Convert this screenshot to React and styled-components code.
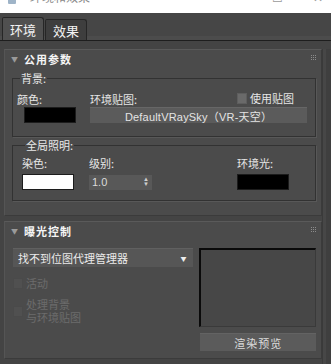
import React from "react";
import styled, { createGlobalStyle } from "styled-components";

const GlobalStyle = createGlobalStyle`
  html, body { margin: 0; padding: 0; background: #444444; }
  body {
    font-family: "Noto Sans CJK SC", "Liberation Sans", sans-serif;
    font-size: 11px;
    color: #e6e6e6;
    width: 331px;
    height: 364px;
    overflow: hidden;
  }
  * { box-sizing: border-box; }
`;

const Window = styled.div`
  width: 331px;
  height: 364px;
  display: flex;
  flex-direction: column;
  background: #444444;
`;

const TitleBar = styled.div`
  height: 13px;
  background: #ffffff;
  overflow: hidden;
  display: flex;
  align-items: flex-end;
  padding: 0 8px 0 8px;
`;

const TitleIcon = styled.div`
  width: 8px;
  height: 4px;
  margin-bottom: 9px;
  background: #9fb4c8;
  border-radius: 0 0 1px 1px;
`;

const TitleText = styled.div`
  font-size: 12px;
  line-height: 12px;
  color: #8a8a8a;
  margin-left: 14px;
  margin-bottom: 10px;
  flex: 1;
`;

const TitleBtn = styled.div`
  font-size: 12px;
  line-height: 12px;
  color: #9a9a9a;
  margin-bottom: 10px;
  margin-left: ${(p) => p.$gap}px;
`;

const TabStrip = styled.div`
  height: 28px;
  display: flex;
  align-items: flex-end;
  padding-left: 2px;
  background: #464646;
  border-bottom: 1px solid #1e1e1e;
  box-shadow: 0 -4px 0 #4c4c4c inset;
`;

const Tab = styled.div`
  height: ${(p) => (p.$active ? 23 : 21)}px;
  padding: 0 7px;
  display: flex;
  align-items: center;
  font-size: 13px;
  color: #f2f2f2;
  background: ${(p) => (p.$active ? "#505050" : "#3e3e3e")};
  border: 1px solid #262626;
  border-bottom: none;
  border-radius: 2px 3px 0 0;
  margin-right: 1px;
`;

const Body = styled.div`
  flex: 1;
  display: flex;
  padding-top: 8px;
`;

const Main = styled.div`
  flex: 1;
  display: flex;
  flex-direction: column;
  gap: 5px;
  padding-left: 4px;
`;

const ScrollStrip = styled.div`
  width: 9px;
  border-left: 1px solid #3a3a3a;
  background: #3f3f3f;
  box-shadow: 3px 0 0 #474747 inset;
`;

const Rollout = styled.div`
  width: 318px;
  height: ${(p) => p.$h}px;
  background: #4b4b4b;
  border: 1px solid #3b3b3b;
  border-top-color: #5a5a5a;
  border-left-color: #555555;
  display: flex;
  flex-direction: column;
`;

const RollHeader = styled.div`
  height: 18px;
  display: flex;
  align-items: center;
  padding-left: 6px;
  position: relative;
`;

const Caret = styled.span`
  font-size: 7px;
  color: #9a9a9a;
  width: 13px;
`;

const RollTitle = styled.span`
  font-weight: bold;
  font-size: 11px;
  color: #f5f5f5;
  letter-spacing: 1px;
`;

const Grip = styled.svg`
  position: absolute;
  right: 5px;
  top: 5px;
  width: 5px;
  height: 5px;
`;

const RollBody = styled.div`
  padding: ${(p) => p.$pad};
  display: flex;
  flex-direction: ${(p) => p.$dir || "column"};
  gap: ${(p) => p.$gap || 0}px;
`;

const Group = styled.fieldset`
  margin: 0;
  padding: ${(p) => p.$pad};
  border: 1px solid #323232;
  box-shadow: 1px 1px 0 #585858;
  height: ${(p) => p.$h}px;
  min-width: 0;
`;

const Legend = styled.legend`
  padding: 0 1px;
  margin-left: 3px;
  font-size: 11px;
  line-height: 11px;
  color: #e8e8e8;
`;

const Grid = styled.div`
  display: grid;
  grid-template-columns: ${(p) => p.$cols};
  row-gap: ${(p) => p.$rg || 2}px;
  align-items: center;
`;

const Label = styled.div`
  font-size: 11px;
  line-height: 12px;
  color: ${(p) => (p.$dim ? "#707070" : "#e6e6e6")};
  padding-left: ${(p) => p.$pl || 0}px;
`;

const Swatch = styled.div`
  width: 52px;
  height: 16px;
  background: ${(p) => p.$c};
  border: 1px solid #1c1c1c;
  margin-left: ${(p) => p.$ml || 0}px;
`;

const MapRow = styled.div`
  display: grid;
  grid-template-columns: 147px auto;
  align-items: center;
`;

const CheckWrap = styled.label`
  display: flex;
  align-items: center;
  gap: 3px;
  color: ${(p) => (p.$dim ? "#6c6c6c" : "#e6e6e6")};
  font-size: 11px;
  line-height: 13px;
  margin-top: ${(p) => p.$mt || 0}px;
`;

const Box = styled.span`
  width: 10px;
  height: 11px;
  background: ${(p) => (p.$dim ? "#505050" : "#6a6a6a")};
  border: 1px solid ${(p) => (p.$dim ? "#4a4a4a" : "#5e5e5e")};
  flex: none;
`;

const WideButton = styled.div`
  height: 16px;
  width: ${(p) => p.$w}px;
  background: #5b5b5b;
  border-top: 1px solid #666;
  color: #e4e4e4;
  font-family: "Liberation Sans", "Noto Sans CJK SC", sans-serif;
  font-size: 11px;
  display: flex;
  align-items: center;
  justify-content: center;
  letter-spacing: 0.2px;
`;

const Spinner = styled.div`
  width: 63px;
  height: 15px;
  background: #585858;
  display: flex;
  align-items: center;
  justify-content: space-between;
  padding: 0 3px 0 3px;
  color: #dadada;
  font-family: "Liberation Sans", sans-serif;
  font-size: 11px;
`;

const Arrows = styled.span`
  display: flex;
  flex-direction: column;
  font-size: 6px;
  line-height: 5px;
  color: #cfcfcf;
`;

const LeftCol = styled.div`
  width: 181px;
  display: flex;
  flex-direction: column;
`;

const RightCol = styled.div`
  width: 117px;
  display: flex;
  flex-direction: column;
  gap: 6px;
`;

const Dropdown = styled.div`
  height: 19px;
  background: #565656;
  border-top: 1px solid #606060;
  display: flex;
  align-items: center;
  justify-content: space-between;
  padding: 0 7px 0 5px;
  font-size: 11px;
  color: #ebebeb;
  margin-bottom: 10px;
`;

const DropArrow = styled.span`
  font-size: 6px;
  color: #eeeeee;
`;

const Preview = styled.div`
  height: 79px;
  background: #474747;
  border-top: 2px solid #0a0a0a;
  border-left: 2px solid #0a0a0a;
  border-right: 1px solid #3a3a3a;
  border-bottom: 1px solid #3a3a3a;
`;

const RenderBtn = styled.div`
  height: 18px;
  margin-left: 1px;
  background: #5b5b5b;
  border-top: 1px solid #636363;
  color: #dcdcdc;
  font-size: 11px;
  display: flex;
  align-items: center;
  justify-content: center;
  letter-spacing: 1px;
`;

function GripDots() {
  const dots = [];
  for (let r = 0; r < 3; r++)
    for (let c = 0; c < 3; c++)
      dots.push(<rect key={r * 3 + c} x={c * 2} y={r * 2} width="1" height="1" fill="#8c8c8c" />);
  return <Grip viewBox="0 0 5 5">{dots}</Grip>;
}

export default function App() {
  return (
    <Window>
      <GlobalStyle />
      <TitleBar>
        <TitleIcon />
        <TitleText>环境和效果</TitleText>
        <TitleBtn $gap={0}>☐</TitleBtn>
        <TitleBtn $gap={30}>✕</TitleBtn>
      </TitleBar>
      <TabStrip>
        <Tab $active>环境</Tab>
        <Tab>效果</Tab>
      </TabStrip>
      <Body>
        <Main>
          <Rollout $h={167}>
            <RollHeader>
              <Caret>▼</Caret>
              <RollTitle>公用参数</RollTitle>
              <GripDots />
            </RollHeader>
            <RollBody $pad="5px 5px 0 7px" $gap={3}>
              <Group $pad="8px 7px 0 4px" $h={64}>
                <Legend>背景:</Legend>
                <Grid $cols="73px 1fr" $rg={2}>
                  <Label>颜色:</Label>
                  <MapRow>
                    <Label>环境贴图:</Label>
                    <CheckWrap>
                      <Box />
                      使用贴图
                    </CheckWrap>
                  </MapRow>
                  <Swatch $c="#000000" $ml={7} />
                  <WideButton $w={217}>DefaultVRaySky（VR-天空）</WideButton>
                </Grid>
              </Group>
              <Group $pad="6px 7px 0 9px" $h={61}>
                <Legend>全局照明:</Legend>
                <Grid $cols="67px 148px 1fr" $rg={5}>
                  <Label>染色:</Label>
                  <Label>级别:</Label>
                  <Label>环境光:</Label>
                  <Swatch $c="#ffffff" />
                  <Spinner>
                    1.0
                    <Arrows>
                      <span>▲</span>
                      <span>▼</span>
                    </Arrows>
                  </Spinner>
                  <Swatch $c="#000000" />
                </Grid>
              </Group>
            </RollBody>
          </Rollout>
          <Rollout $h={138}>
            <RollHeader>
              <Caret>▼</Caret>
              <RollTitle>曝光控制</RollTitle>
              <GripDots />
            </RollHeader>
            <RollBody $pad="8px 5px 0 8px" $dir="row" $gap={6}>
              <LeftCol>
                <Dropdown>
                  找不到位图代理管理器
                  <DropArrow>▼</DropArrow>
                </Dropdown>
                <CheckWrap $dim>
                  <Box $dim />
                  活动
                </CheckWrap>
                <CheckWrap $dim $mt={8}>
                  <Box $dim />
                  <span>
                    处理背景
                    <br />
                    与环境贴图
                  </span>
                </CheckWrap>
              </LeftCol>
              <RightCol>
                <Preview />
                <RenderBtn>渲染预览</RenderBtn>
              </RightCol>
            </RollBody>
          </Rollout>
        </Main>
        <ScrollStrip />
      </Body>
    </Window>
  );
}
